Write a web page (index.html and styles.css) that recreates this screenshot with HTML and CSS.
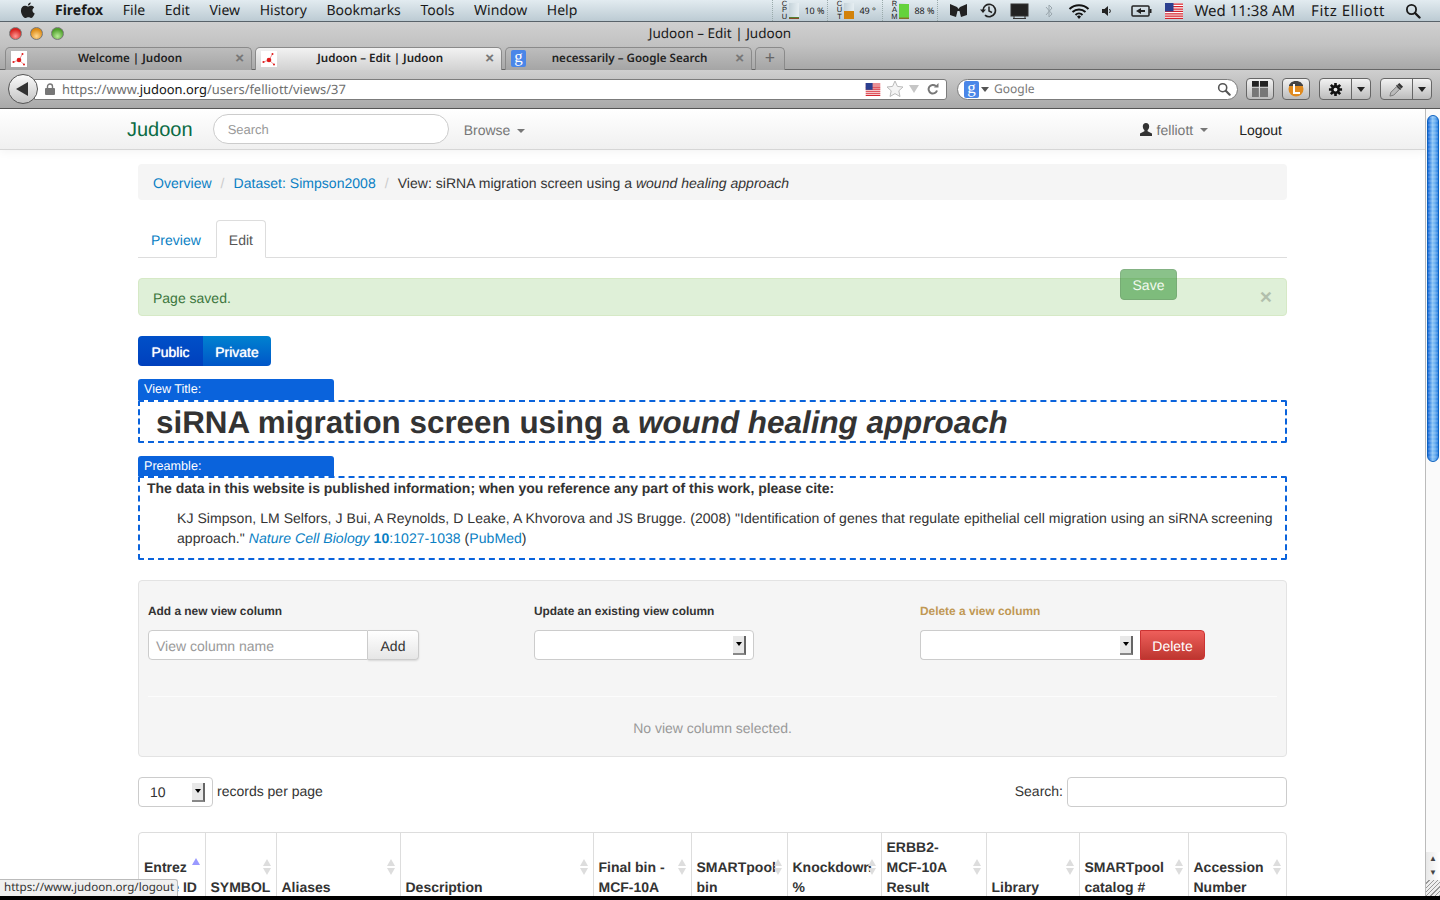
FILE: index.html
```html
<!DOCTYPE html>
<html lang="en">

<head>
    <meta charset="UTF-8">
    <meta name="viewport" content="width=device-width, initial-scale=1.0">
    <title>Judoon - Edit | Judoon</title>
    <link rel="stylesheet" href="styles.css">
</head>

<body>
    <svg class="defs" width="0" height="0">
        <symbol id="molecule" viewBox="0 0 16 16">
            <rect width="16" height="16" fill="#fff" />
            <path d="M8 9 L11.500 3 M8 9 L2.500 11 M8 9 L13 13.500" stroke="#e8686a" stroke-width="0.7" />
            <circle cx="8" cy="9" r="2.300" fill="#e01c1c" />
            <circle cx="11.500" cy="3" r="1" fill="#e01c1c" />
            <circle cx="2.500" cy="11" r="1.100" fill="#e01c1c" />
            <circle cx="13" cy="13.500" r="1" fill="#e01c1c" />
        </symbol>
        <symbol id="flag" viewBox="0 0 18 16">
            <rect width="18" height="16" fill="#fff" />
            <path d="M0 1.200h18M0 3.600h18M0 6h18M0 8.400h18M0 10.800h18M0 13.200h18" stroke="#d5222c" stroke-width="1.250" />
            <path d="M0 15.400h18" stroke="#d5222c" stroke-width="1.200" />
            <rect width="8.500" height="8.400" fill="#2b3f8f" />
        </symbol>
        <symbol id="lens" viewBox="0 0 16 16">
            <circle cx="6.500" cy="6.500" r="4.600" fill="none" stroke="currentColor" stroke-width="1.800" />
            <path d="M10 10 L14.500 14.500" stroke="currentColor" stroke-width="2.400" stroke-linecap="round" />
        </symbol>
    </svg>

    <div class="menubar">
        <svg class="apple" viewBox="0 0 16 18">
            <path d="M11.500 0.500c.1 1.400-1.400 3.300-3.100 3.200C8.200 2.200 9.900.6 11.500.5zM8.300 4.700c.9 0 1.800-.8 3.400-.8 1 0 2.500.4 3.400 1.800-2.700 1.600-2.200 5.300.6 6.400-.7 1.900-2.400 4.900-4 4.900-1 0-1.500-.7-2.700-.7s-1.800.7-2.800.7C3.900 17 1 12.800 1 9.200 1 5.900 3.200 4 5.200 4c1.300 0 2.300.7 3.100.7z" fill="#222" />
        </svg>
        <ul class="menu">
            <li class="app-name">Firefox</li>
            <li>File</li>
            <li>Edit</li>
            <li>View</li>
            <li>History</li>
            <li>Bookmarks</li>
            <li>Tools</li>
            <li>Window</li>
            <li>Help</li>
        </ul>
        <div class="meters">
            <div class="meter">
                <span class="meter-label">C<br>P<br>U</span>
                <span class="meter-bar"><i class="fill-cpu" style="height: 10%"></i></span>
                <span class="meter-value">10 %</span>
            </div>
            <div class="meter">
                <span class="meter-label">C<br>U<br>T</span>
                <span class="meter-bar"><i class="fill-cut" style="height: 49%"></i></span>
                <span class="meter-value">49 °</span>
            </div>
            <div class="meter">
                <span class="meter-label">R<br>A<br>M</span>
                <span class="meter-bar"><i class="fill-ram" style="height: 88%"></i></span>
                <span class="meter-value">88 %</span>
            </div>
        </div>
        <div class="status-icons">
            <svg class="st-mask" viewBox="0 0 17 15">
                <path d="M0 1 L7 4 L8.500 6 L10 4 L17 1 V12 L11 14 L9.500 8 H7.500 L6 14 L0 12z" fill="#222" />
            </svg>
            <svg class="st-time" viewBox="0 0 17 17">
                <path d="M3 8.500a6.200 6.200 0 1 1 2 4.600" fill="none" stroke="#222" stroke-width="1.700" />
                <path d="M0 7.500h6l-3 3.500z" fill="#222" />
                <path d="M9 4.500v4.500l3 1.500" fill="none" stroke="#222" stroke-width="1.500" />
            </svg>
            <svg class="st-display" viewBox="0 0 19 16">
                <rect x="1" y="1" width="17" height="12" fill="#222" stroke="#333" />
                <path d="M4 13v2M15 13v2M3 15.500h13" stroke="#333" />
            </svg>
            <svg class="st-bt" viewBox="0 0 8 16">
                <path d="M1 4l6 7-3 3V2l3 3-6 7" fill="none" stroke="#9aa6ad" stroke-width="1" />
            </svg>
            <svg class="st-wifi" viewBox="0 0 22 16">
                <path d="M1.500 6a14 14 0 0 1 19 0M4.500 9a9.500 9.500 0 0 1 13 0M7.500 12a5 5 0 0 1 7 0" fill="none" stroke="#111" stroke-width="2" />
                <path d="M11 16l-2-2.500a3 3 0 0 1 4 0z" fill="#111" />
            </svg>
            <svg class="st-speaker" viewBox="0 0 10 12">
                <path d="M0 4h2.500L6 1v10L2.500 8H0z" fill="#222" />
                <path d="M7.500 4a3 3 0 0 1 0 4" fill="none" stroke="#222" />
            </svg>
            <svg class="st-battery" viewBox="0 0 21 12">
                <rect x="1" y="1" width="17" height="10" rx="1" fill="none" stroke="#222" stroke-width="1.500" />
                <rect x="18.500" y="4" width="2" height="4" fill="#222" />
                <path d="M5 6l5-3v2h4v2h-4v2z" fill="#222" />
            </svg>
            <svg class="st-flag"><use href="#flag" /></svg>
        </div>
        <span class="clock">Wed 11:38 AM</span>
        <span class="user-name">Fitz Elliott</span>
        <svg class="spotlight"><use href="#lens" /></svg>
    </div>

    <div class="browser">
        <div class="titlebar">
            <span class="light light-red"></span>
            <span class="light light-yellow"></span>
            <span class="light light-green"></span>
            <span class="window-title">Judoon – Edit | Judoon</span>
        </div>
        <div class="tabstrip">
            <div class="tab">
                <svg class="favicon"><use href="#molecule" /></svg>
                <span class="tab-label">Welcome | Judoon</span>
                <span class="tab-close">×</span>
            </div>
            <div class="tab tab-active">
                <svg class="favicon"><use href="#molecule" /></svg>
                <span class="tab-label">Judoon – Edit | Judoon</span>
                <span class="tab-close">×</span>
            </div>
            <div class="tab">
                <span class="g-icon">g</span>
                <span class="tab-label">necessarily – Google Search</span>
                <span class="tab-close">×</span>
            </div>
            <div class="tab-new">+</div>
        </div>
        <div class="toolbar">
            <div class="back-button">
                <svg viewBox="0 0 14 16"><path d="M1 8 L13 1 V15z" fill="#333" /></svg>
            </div>
            <div class="urlbar">
                <svg class="lock" viewBox="0 0 10 12">
                    <path d="M2.500 5V3.500a2.500 2.500 0 0 1 5 0V5" fill="none" stroke="#777" stroke-width="1.400" />
                    <rect y="5" width="10" height="7" rx="1" fill="#777" />
                </svg>
                <span class="url"><span>https://www.</span><b>judoon.org</b><span>/users/felliott/views/37</span></span>
                <svg class="url-flag"><use href="#flag" /></svg>
                <svg class="url-star" viewBox="0 0 18 18">
                    <path d="M9 1l2.400 5.400 5.600.6-4.200 3.800 1.200 5.700L9 13.600 4 16.500l1.200-5.700L1 7l5.600-.6z" fill="#f4f4f4" stroke="#bbb" />
                </svg>
                <svg class="url-drop" viewBox="0 0 10 8"><path d="M0 0h10L5 8z" fill="#c6c6c6" /></svg>
                <svg class="url-reload" viewBox="0 0 12 12">
                    <path d="M10 7.500A4.300 4.300 0 1 1 8.800 3" fill="none" stroke="#777" stroke-width="2" />
                    <path d="M7 4.500h4.500V0z" fill="#777" />
                </svg>
            </div>
            <div class="searchbar">
                <span class="g-icon">g</span>
                <svg class="search-drop" viewBox="0 0 8 5"><path d="M0 0h8L4 5z" fill="#555" /></svg>
                <span class="search-text">Google</span>
                <svg class="search-lens"><use href="#lens" /></svg>
            </div>
            <div class="tool-button tool-square tool-first">
                <svg viewBox="0 0 14 14">
                    <path d="M0 0h6v5H0zM7 0h7v5H7z" fill="#222" />
                    <path d="M0 6h6v8H0zM7 6h7v8H7z" fill="#777" />
                </svg>
            </div>
            <div class="tool-button tool-square">
                <svg viewBox="0 0 16 16">
                    <circle cx="8" cy="8" r="7.500" fill="#e08a1e" />
                    <path d="M1 5h14v-1a8 8 0 0 0-14 0z" fill="#444" />
                    <path d="M6 3v9h6" fill="none" stroke="#fff" stroke-width="2" />
                </svg>
            </div>
            <div class="tool-button tool-split">
                <span class="tool-part">
                    <svg viewBox="0 0 16 16">
                        <path d="M8 1v14M1 8h14M3 3l10 10M3 13L13 3" stroke="#111" stroke-width="2.800" />
                        <circle cx="8" cy="8" r="4.800" fill="#111" />
                        <circle cx="8" cy="8" r="2" fill="#e8e8e8" />
                    </svg>
                </span>
                <span class="tool-arrow"></span>
            </div>
            <div class="tool-button tool-split">
                <span class="tool-part">
                    <svg viewBox="0 0 16 16">
                        <path d="M1 15l1-4 6-6 3 3-6 6z" fill="#bbb" stroke="#777" />
                        <path d="M9 3l2-2 4 4-2 2z" fill="#333" />
                        <path d="M8 3.500l4.500 4.500" stroke="#333" stroke-width="1.500" />
                    </svg>
                </span>
                <span class="tool-arrow"></span>
            </div>
        </div>
    </div>

    <div class="viewport">
        <main class="page">
            <nav class="navbar">
                <a class="brand">Judoon</a>
                <div class="nav-search">Search</div>
                <a class="nav-link nav-browse">Browse <span class="caret"></span></a>
                <a class="nav-link nav-user">
                    <svg class="user-icon" viewBox="0 0 12 13">
                        <path d="M6 0c2 0 3.200 1.500 3.200 3.500 0 1.500-.8 3-1.600 3.600v1.200L12 10.500V13H0v-2.500l4.400-2.200V7.100C3.600 6.500 2.800 5 2.800 3.500 2.800 1.500 4 0 6 0z" fill="#333" />
                    </svg>
                    felliott <span class="caret"></span>
                </a>
                <a class="nav-logout">Logout</a>
            </nav>

            <div class="container">
                <ol class="breadcrumb">
                    <li><a>Overview</a></li>
                    <li><a>Dataset: Simpson2008</a></li>
                    <li>View: siRNA migration screen using a <em>wound healing approach</em></li>
                </ol>

                <ul class="nav-tabs">
                    <li><a>Preview</a></li>
                    <li class="active"><a>Edit</a></li>
                </ul>

                <div class="alert">
                    <span>Page saved.</span>
                    <span class="alert-close">×</span>
                    <button class="btn-save">Save</button>
                </div>

                <div class="visibility">
                    <button class="btn-public">Public</button>
                    <button class="btn-private">Private</button>
                </div>

                <div class="edit-label">View Title:</div>
                <div class="edit-box">
                    <h1 class="view-title">siRNA migration screen using a <em>wound healing approach</em></h1>
                </div>

                <div class="edit-label edit-label-second">Preamble:</div>
                <div class="edit-box preamble">
                    <p class="cite-intro">The data in this website is published information; when you reference any part of this work, please cite:</p>
                    <p class="cite">KJ Simpson, LM Selfors, J Bui, A Reynolds, D Leake, A Khvorova and JS Brugge. (2008) "Identification of genes that regulate epithelial cell migration using an siRNA screening approach." <a class="journal">Nature Cell Biology</a> <a class="volume">10</a><a>:1027-1038</a> (<a>PubMed</a>)</p>
                </div>

                <section class="well">
                    <div class="well-columns">
                        <div>
                            <label class="well-label">Add a new view column</label>
                            <div class="input-group">
                                <div class="field field-grow placeholder">View column name</div>
                                <button class="btn-add">Add</button>
                            </div>
                        </div>
                        <div>
                            <label class="well-label">Update an existing view column</label>
                            <div class="input-group">
                                <div class="field select-field"><span class="select-arrow"></span></div>
                            </div>
                        </div>
                        <div>
                            <label class="well-label label-warning">Delete a view column</label>
                            <div class="input-group">
                                <div class="field select-field select-joined"><span class="select-arrow"></span></div>
                                <button class="btn-delete">Delete</button>
                            </div>
                        </div>
                    </div>
                    <hr class="well-rule">
                    <p class="no-selection">No view column selected.</p>
                </section>

                <div class="table-controls">
                    <div class="per-page">
                        <div class="field select-small">10<span class="select-arrow"></span></div>
                        <span>records per page</span>
                    </div>
                    <div class="table-search">
                        <span>Search:</span>
                        <div class="field search-field"></div>
                    </div>
                </div>

                <table class="data-table">
                    <thead>
                        <tr>
                            <th class="sorted">Entrez Gene ID<span class="sort"></span></th>
                            <th>SYMBOL<span class="sort"></span></th>
                            <th>Aliases<span class="sort"></span></th>
                            <th>Description<span class="sort"></span></th>
                            <th>Final bin - MCF-10A<span class="sort"></span></th>
                            <th>SMARTpool bin<span class="sort"></span></th>
                            <th>Knockdown %<span class="sort"></span></th>
                            <th>ERBB2-<br>MCF-10A Result<span class="sort"></span></th>
                            <th>Library<span class="sort"></span></th>
                            <th>SMARTpool catalog #<span class="sort"></span></th>
                            <th>Accession Number<span class="sort"></span></th>
                        </tr>
                    </thead>
                </table>
            </div>
        </main>

        <div class="scrollbar">
            <div class="scroll-track"><div class="scroll-thumb"></div></div>
            <div class="scroll-arrow">▲</div>
            <div class="scroll-arrow">▼</div>
            <div class="scroll-corner"></div>
        </div>

        <div class="status-tip">https://www.judoon.org/logout</div>
    </div>

    <div class="screen-edge"></div>
</body>

</html>
```

FILE: styles.css
```css
* {
    margin: 0;
    padding: 0;
    box-sizing: border-box;
}

html,
body {
    height: 100%;
    overflow: hidden;
}

body {
    display: flex;
    flex-direction: column;
    width: 1440px;
    height: 900px;
    background: #000;
    color: #333;
    font-family: 'Liberation Sans', Arial, sans-serif;
    font-size: 14px;
    line-height: 20px;
    text-rendering: geometricPrecision;
}

.defs {
    position: absolute;
}

a {
    color: #0a7fc4;
}

ul,
ol {
    list-style: none;
}

button {
    font-family: inherit;
    font-size: 14px;
    border: none;
    text-rendering: geometricPrecision;
}

/* mac menu bar */
.menubar {
    display: flex;
    align-items: center;
    height: 22px;
    padding-left: 20px;
    background: linear-gradient(#e2ebf0, #bccbd3);
    border-bottom: 1px solid #59636a;
    font-family: 'Noto Sans', sans-serif;
    font-size: 14px;
    color: #1a1a1a;
}

.apple {
    width: 15px;
    height: 17px;
    margin-right: 20px;
}

.menu {
    display: flex;
    gap: 19.6px;
}

.app-name {
    font-weight: bold;
}

.meters {
    display: flex;
    margin-left: auto;
    height: 21px;
    border-right: 1px dotted #9aa;
}

.meter {
    display: flex;
    align-items: center;
    width: 55px;
    padding-left: 7px;
    border-left: 1px dotted #9aa;
}

.meter-label {
    width: 8px;
    font-family: 'Liberation Sans', sans-serif;
    font-size: 7.5px;
    line-height: 6.5px;
    text-align: center;
}

.meter-bar {
    display: flex;
    align-items: flex-end;
    width: 10px;
    height: 16px;
    margin-left: 1px;
    background: linear-gradient(90deg, #c5d3da, #e6eef2);
}

.meter-bar i {
    display: block;
    width: 100%;
}

.fill-cpu {
    background: linear-gradient(#3a9a3a, #a03020);
}

.fill-cut {
    background: #d2820a;
}

.fill-ram {
    background: linear-gradient(#64d23c 85%, #8a5a20);
}

.meter-value {
    margin-left: 5px;
    font-size: 9px;
    white-space: nowrap;
}

.status-icons {
    display: flex;
    align-items: center;
    margin-left: 12px;
}

.st-mask {
    width: 17px;
    height: 15px;
}

.st-time {
    width: 17px;
    height: 17px;
    margin-left: 13px;
}

.st-display {
    width: 19px;
    height: 16px;
    margin-left: 13px;
}

.st-bt {
    width: 8px;
    height: 16px;
    margin-left: 16px;
}

.st-wifi {
    width: 22px;
    height: 16px;
    margin-left: 15px;
}

.st-speaker {
    width: 10px;
    height: 12px;
    margin-left: 12px;
}

.st-battery {
    width: 21px;
    height: 12px;
    margin-left: 19px;
}

.st-flag {
    width: 18px;
    height: 16px;
    margin-left: 13px;
}

.clock {
    margin-left: 11px;
    font-size: 15px;
}

.user-name {
    margin-left: 16px;
    font-size: 15px;
    letter-spacing: 0.5px;
}

.spotlight {
    width: 16px;
    height: 16px;
    margin: 0 19px 0 20px;
    color: #1a1a1a;
}

/* browser window chrome */
.browser {
    background: linear-gradient(#cfcfcf, #a9a9a9 50%);
    font-family: 'Noto Sans', sans-serif;
}

.titlebar {
    position: relative;
    display: flex;
    align-items: center;
    gap: 8px;
    height: 23px;
    padding-left: 9px;
    background: linear-gradient(#d0d0d0, #c2c2c2);
}

.light {
    width: 13px;
    height: 13px;
    border-radius: 50%;
    border: 1px solid #777;
}

.light-red {
    background: radial-gradient(circle at 50% 75%, #ff9a94, #d5201c 70%);
}

.light-yellow {
    background: radial-gradient(circle at 50% 75%, #ffd890, #dc8a14 70%);
}

.light-green {
    background: radial-gradient(circle at 50% 75%, #b8ec96, #4d9e2a 70%);
}

.window-title {
    position: absolute;
    left: 0;
    right: 0;
    top: 1px;
    text-align: center;
    font-size: 13.5px;
    color: #1a1a1a;
}

.tabstrip {
    display: flex;
    gap: 3px;
    height: 25px;
    padding: 2px 0 0 5px;
    background: linear-gradient(#c2c2c2, #a8a8a8);
    border-bottom: 1px solid #666;
}

.tab {
    display: flex;
    align-items: center;
    width: 247px;
    height: 23px;
    padding: 0 7px 1px 5px;
    border: 1px solid #8a8a8a;
    border-bottom: none;
    border-radius: 5px 5px 0 0;
    background: linear-gradient(#bdbdbd, #a5a5a5);
    font-size: 11.6px;
    font-weight: 600;
    color: #222;
}

.tab-active {
    background: linear-gradient(#f2f2f2, #d2d2d2);
    height: 23px;
}

.favicon {
    width: 16px;
    height: 16px;
    flex: none;
    margin-top: 1px;
}

.g-icon {
    flex: none;
    width: 15px;
    height: 17px;
    background: #4a86e8;
    border-radius: 2px;
    font-family: 'Liberation Serif', serif;
    font-size: 17px;
    font-weight: normal;
    line-height: 13px;
    text-align: center;
    color: #fff;
}

.tab-label {
    flex: 1;
    padding-right: 2px;
    text-align: center;
    white-space: nowrap;
}

.tab-close {
    font-family: 'Liberation Sans', sans-serif;
    font-size: 15px;
    font-weight: bold;
    color: #777;
}

.tab-new {
    width: 30px;
    height: 23px;
    border: 1px solid #8a8a8a;
    border-bottom: none;
    border-radius: 5px 5px 0 0;
    text-align: center;
    font-size: 18px;
    line-height: 21px;
    color: #666;
    background: linear-gradient(#bdbdbd, #a5a5a5);
}

.toolbar {
    display: flex;
    align-items: center;
    height: 39px;
    padding-left: 8px;
    background: linear-gradient(#cfcfcf, #a9a9a9);
    border-bottom: 1px solid #555;
}

.back-button {
    position: relative;
    z-index: 1;
    display: flex;
    align-items: center;
    justify-content: center;
    width: 30px;
    height: 30px;
    border-radius: 50%;
    border: 1px solid #555;
    background: linear-gradient(#fbfbfb, #c4c4c4);
}

.back-button svg {
    width: 14px;
    height: 16px;
    margin-right: 3px;
}

.urlbar {
    display: flex;
    align-items: center;
    width: 913px;
    height: 21px;
    margin-left: -4px;
    padding-left: 10px;
    background: #fff;
    border: 1px solid #7c7c7c;
    border-radius: 0 3px 3px 0;
}

.lock {
    width: 10px;
    height: 12px;
    flex: none;
}

.url {
    margin-left: 7px;
    font-size: 12.9px;
    color: #6e6e6e;
}

.url b {
    font-weight: normal;
    color: #111;
}

.url-flag {
    width: 18px;
    height: 13px;
    margin-left: auto;
}

.url-star {
    width: 18px;
    height: 18px;
    margin-left: 4px;
}

.url-drop {
    width: 10px;
    height: 8px;
    margin-left: 5px;
}

.url-reload {
    width: 12px;
    height: 12px;
    margin: 0 7px 0 8px;
}

.searchbar {
    display: flex;
    align-items: center;
    width: 281px;
    height: 21px;
    margin-left: 10px;
    padding: 0 6px;
    background: #fff;
    border: 1px solid #7c7c7c;
    border-radius: 11px;
}

.search-drop {
    width: 8px;
    height: 5px;
    margin-left: 2px;
}

.search-text {
    margin-left: 5px;
    font-size: 12px;
    color: #777;
}

.search-lens {
    width: 14px;
    height: 14px;
    margin-left: auto;
    color: #555;
}

.tool-button {
    display: flex;
    height: 22px;
    border: 1px solid #666;
    border-radius: 4px;
    background: linear-gradient(#f2f2f2, #bcbcbc);
    align-items: center;
    justify-content: center;
}

.tool-square {
    width: 28px;
    margin-left: 8px;
}

.tool-square svg {
    width: 16px;
    height: 16px;
}

.tool-split {
    width: 52px;
    margin-left: 9px;
}

.tool-part {
    display: flex;
    align-items: center;
    justify-content: center;
    flex: 1;
    height: 100%;
    border-right: 1px solid #666;
}

.tool-part svg {
    width: 15px;
    height: 15px;
}

.tool-arrow {
    display: flex;
    align-items: center;
    justify-content: center;
    width: 18px;
}

.tool-arrow::before {
    content: '';
    border: 4px solid transparent;
    border-top: 5px solid #222;
    border-bottom: none;
}

/* page area */
.viewport {
    position: relative;
    display: flex;
    flex: 1;
    min-height: 0;
    background: #fff;
}

.page {
    flex: 1;
    min-width: 0;
    overflow: hidden;
}

.navbar {
    display: flex;
    align-items: center;
    height: 41px;
    padding: 0 143px 0 127px;
    background: linear-gradient(#fff, #f0f0f0);
    border-bottom: 1px solid #d6d6d6;
    box-shadow: 0 1px 10px rgba(0, 0, 0, 0.06);
}

.brand {
    margin-top: 2px;
    font-size: 20px;
    color: #0b6b44;
}

.nav-search {
    width: 236px;
    height: 30px;
    margin-left: 20px;
    padding: 0 14px;
    border: 1px solid #ccc;
    border-radius: 15px;
    background: #fff;
    font-size: 13px;
    line-height: 29px;
    color: #999;
}

.nav-link {
    margin-top: 2px;
    color: #777;
}

.nav-browse {
    margin-left: 15px;
}

.nav-user {
    display: flex;
    align-items: center;
    gap: 5px;
    margin-left: auto;
}

.nav-user .caret {
    margin-left: 2px;
}

.user-icon {
    width: 12px;
    height: 13px;
    margin-top: -2px;
}

.caret {
    display: inline-block;
    margin-left: 3px;
    vertical-align: middle;
    border-left: 4px solid transparent;
    border-right: 4px solid transparent;
    border-top: 4px solid #777;
}

.nav-logout {
    margin: 2px 0 0 31px;
    color: #222;
}

.container {
    width: 1149px;
    margin: 14px auto 0;
}

.breadcrumb {
    display: flex;
    height: 36px;
    align-items: center;
    padding: 2px 15px 0;
    background: #f5f5f5;
    border-radius: 4px;
    letter-spacing: 0.03px;
}

.breadcrumb li + li::before {
    content: '/';
    padding: 0 9px;
    color: #ccc;
}

.nav-tabs {
    display: flex;
    height: 38px;
    margin-top: 20px;
    border-bottom: 1px solid #ddd;
}

.nav-tabs li {
    height: 38px;
    padding: 9px 12px;
    border: 1px solid transparent;
    border-radius: 4px 4px 0 0;
}

.nav-tabs .active {
    margin-left: 2px;
    border-color: #ddd #ddd #fff;
    background: #fff;
}

.nav-tabs .active a {
    color: #555;
}

.alert {
    position: relative;
    display: flex;
    justify-content: space-between;
    align-items: center;
    height: 38px;
    margin-top: 20px;
    padding: 2px 15px 0 14px;
    background: #dff0d8;
    border: 1px solid #d6e9c6;
    border-radius: 4px;
    color: #3c763d;
}

.alert-close {
    margin-right: -1px;
    font-size: 21px;
    font-weight: bold;
    color: #000;
    opacity: 0.2;
}

/* sits on top of the alert */
.btn-save {
    position: absolute;
    top: -10px;
    right: 109px;
    width: 57px;
    height: 31px;
    border-radius: 4px;
    background: #449d44;
    border: 1px solid #398439;
    color: #fff;
    opacity: 0.62;
}

.visibility {
    display: flex;
    margin-top: 20px;
}

.visibility button {
    height: 30px;
    padding-top: 2px;
    color: #fff;
    text-shadow: 0 0 1px #fff;
}

.btn-public {
    width: 65px;
    background: linear-gradient(#0050c8, #0040bd);
    border-radius: 4px 0 0 4px;
}

.btn-private {
    width: 68px;
    background: linear-gradient(#0082d0, #0055c8);
    border-radius: 0 4px 4px 0;
}

.edit-label {
    width: 196px;
    height: 21px;
    margin-top: 13px;
    padding-left: 6px;
    background: #0a63dc;
    border-radius: 3px 3px 0 0;
    font-size: 12.6px;
    line-height: 20px;
    color: #fff;
}

.edit-label-second {
    margin-top: 13px;
    height: 20px;
}

.edit-box {
    border: 2px dashed #0a63dc;
    border-radius: 2px;
}

.view-title {
    height: 39px;
    padding-left: 16px;
    font-size: 31.4px;
    line-height: 41px;
    color: #333;
}

.preamble {
    height: 84px;
    padding: 0 8px 0 7px;
}

.cite-intro {
    font-weight: bold;
    letter-spacing: -0.02px;
}

.cite {
    margin-top: 10px;
    padding-left: 30px;
    letter-spacing: 0.055px;
}

.journal {
    font-style: italic;
}

.volume {
    font-weight: bold;
}

.well {
    height: 177px;
    margin-top: 20px;
    padding: 20px 9px 0;
    background: #f5f5f5;
    border: 1px solid #e3e3e3;
    border-radius: 4px;
}

.well-columns {
    display: grid;
    grid-template-columns: repeat(3, 386px);
}

.well-label {
    display: block;
    font-size: 11.9px;
    font-weight: bold;
    line-height: 20px;
}

.label-warning {
    color: #c09853;
}

.input-group {
    display: flex;
    margin-top: 9px;
}

.field {
    position: relative;
    height: 30px;
    background: #fff;
    border: 1px solid #ccc;
    border-radius: 4px;
}

.field-grow {
    width: 220px;
    padding-left: 7px;
    border-radius: 4px 0 0 4px;
    line-height: 30px;
}

.placeholder {
    color: #999;
}

.btn-add {
    width: 51px;
    height: 30px;
    padding-top: 1px;
    background: linear-gradient(#fff, #e6e6e6);
    border: 1px solid #ccc;
    border-left: none;
    border-radius: 0 4px 4px 0;
    box-shadow: 0 1px 2px rgba(0, 0, 0, 0.12);
    color: #333;
}

.select-field {
    width: 220px;
}

.select-joined {
    border-radius: 4px 0 0 4px;
    border-right: none;
}

.select-arrow {
    position: absolute;
    top: 5px;
    right: 7px;
    width: 13px;
    height: 19px;
    background: #e8e8e8;
    border-right: 2px solid #666;
    border-bottom: 2px solid #888;
}

.select-arrow::after {
    content: '';
    position: absolute;
    top: 6px;
    left: 3px;
    border: 3px solid transparent;
    border-top: 4px solid #000;
    border-bottom: none;
}

.btn-delete {
    width: 65px;
    height: 30px;
    padding-top: 1px;
    background: linear-gradient(#ee5f5b, #bd362f);
    border: 1px solid #c33;
    border-radius: 0 4px 4px 0;
    color: #fff;
}

.well-rule {
    height: 0;
    margin-top: 36px;
    border: none;
    border-top: 1px solid #fcfcfc;
}

.no-selection {
    margin-top: 21px;
    text-align: center;
    color: #999;
}

.table-controls {
    display: flex;
    justify-content: space-between;
    height: 30px;
    margin-top: 20px;
}

.per-page,
.table-search {
    display: flex;
    gap: 4px;
    line-height: 28px;
}

.select-small {
    width: 75px;
    padding-left: 11px;
}

.search-field {
    width: 220px;
}

.data-table {
    width: 1149px;
    margin-top: 25px;
    table-layout: fixed;
    border-collapse: separate;
    border-spacing: 0;
    border: 1px solid #ddd;
    border-radius: 4px;
}

.data-table th {
    position: relative;
    padding: 4px 5px 4px 4.5px;
    border-left: 1px solid #ddd;
    vertical-align: bottom;
    text-align: left;
    font-weight: bold;
    line-height: 20px;
    color: #333;
}

.data-table th:first-child {
    padding-left: 5px;
    border-left: none;
}

.data-table th:nth-child(1) { width: 66px; }
.data-table th:nth-child(2) { width: 71px; }
.data-table th:nth-child(3) { width: 124px; }
.data-table th:nth-child(4) { width: 193px; }
.data-table th:nth-child(5) { width: 98px; }
.data-table th:nth-child(6) { width: 96px; }
.data-table th:nth-child(7) { width: 94px; }
.data-table th:nth-child(8) { width: 105px; }
.data-table th:nth-child(9) { width: 93px; }
.data-table th:nth-child(10) { width: 109px; }
.data-table th:nth-child(11) { width: 98px; }

.sort {
    position: absolute;
    top: 50%;
    right: 5px;
    margin-top: -8px;
    width: 8px;
    height: 16px;
}

.sort::before,
.sort::after {
    content: '';
    position: absolute;
    left: 0;
    border-left: 4px solid transparent;
    border-right: 4px solid transparent;
}

.sort::before {
    top: 0;
    border-bottom: 7px solid #ddd;
}

.sort::after {
    bottom: 0;
    border-top: 7px solid #ddd;
}

.sorted .sort {
    margin-top: -9px;
}

.sorted .sort::before {
    border-bottom-color: #99f;
}

.sorted .sort::after {
    display: none;
}

.scrollbar {
    display: flex;
    flex-direction: column;
    width: 15px;
    background: #fafafa;
    border-left: 1px solid #bbb;
}

.scroll-track {
    flex: 1;
    padding: 6px 1px 0 1px;
}

.scroll-thumb {
    height: 347px;
    border-radius: 6px;
    border: 1px solid #0d62c0;
    background: repeating-linear-gradient(rgba(255, 255, 255, 0.12), rgba(255, 255, 255, 0.12) 2px, transparent 2px, transparent 4px), linear-gradient(90deg, #1668d8, #8ac4f6 45%, #6cb0f0 70%, #2a7fe0);
}

.scroll-arrow {
    height: 14px;
    text-align: center;
    font-size: 8px;
    line-height: 14px;
    color: #444;
    background: linear-gradient(90deg, #e8e8e8, #fff);
}

.scroll-corner {
    height: 16px;
    background: repeating-linear-gradient(135deg, #eee, #eee 2px, #999 2px, #999 3px);
}

/* firefox link preview, over the table */
.status-tip {
    position: absolute;
    left: 0;
    bottom: 0;
    width: 178px;
    height: 17px;
    padding-left: 4px;
    background: #f0f0f0;
    border: 1px solid #bbb;
    border-left: none;
    border-bottom: none;
    border-radius: 0 3px 0 0;
    font-family: 'Noto Sans', sans-serif;
    font-size: 11.6px;
    line-height: 15px;
    color: #333;
}

.screen-edge {
    height: 4px;
    background: #000;
    flex: none;
}
```
